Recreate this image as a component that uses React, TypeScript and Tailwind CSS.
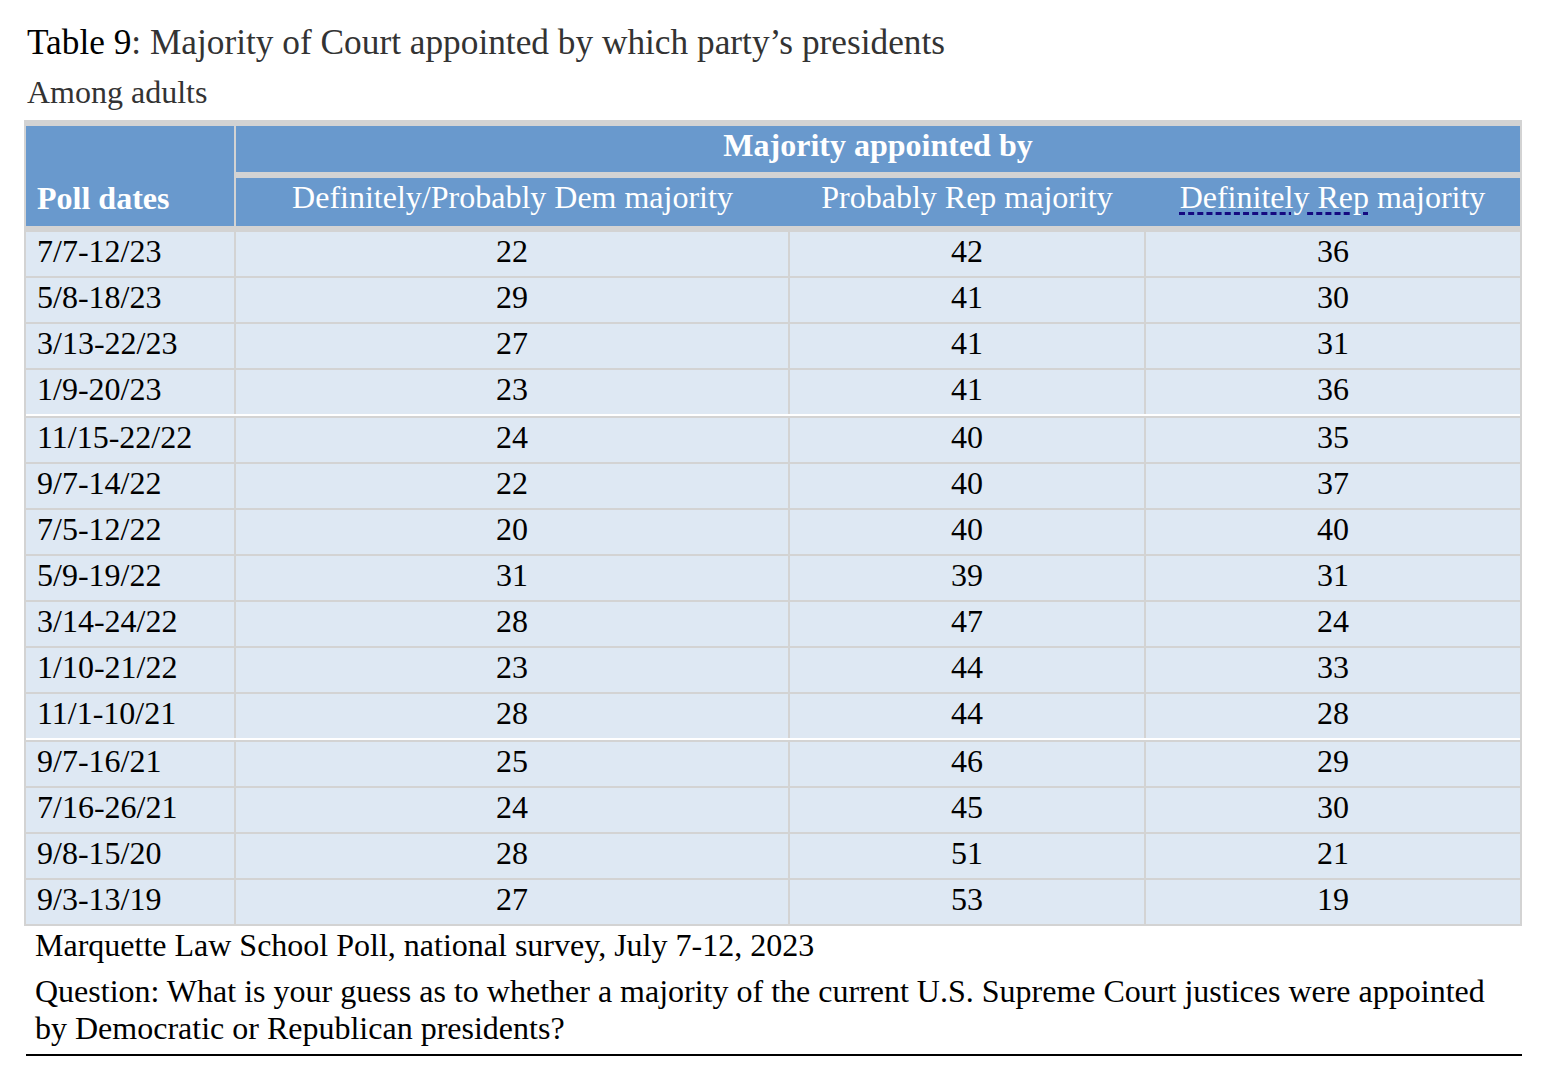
type Row = [string, number, number, number]

const rows: Row[] = [
  ["7/7-12/23", 22, 42, 36],
  ["5/8-18/23", 29, 41, 30],
  ["3/13-22/23", 27, 41, 31],
  ["1/9-20/23", 23, 41, 36],
  ["11/15-22/22", 24, 40, 35],
  ["9/7-14/22", 22, 40, 37],
  ["7/5-12/22", 20, 40, 40],
  ["5/9-19/22", 31, 39, 31],
  ["3/14-24/22", 28, 47, 24],
  ["1/10-21/22", 23, 44, 33],
  ["11/1-10/21", 28, 44, 28],
  ["9/7-16/21", 25, 46, 29],
  ["7/16-26/21", 24, 45, 30],
  ["9/8-15/20", 28, 51, 21],
  ["9/3-13/19", 27, 53, 19],
]

// rows followed by a white rule in the original table
const breakAfter = new Set(["1/9-20/23", "11/1-10/21"])

export default function App() {
  return (
    <div className="min-h-screen bg-white font-['Liberation_Serif','Times_New_Roman',serif] text-black">
      <div className="ml-[24px] w-[1498px] pt-[23px]">
        <h1 className="pl-[3px] text-[35.3px] font-normal leading-[40px]">
          <span className="text-black">Table 9</span>
          <span className="text-[#333333]">: Majority of Court appointed by which party’s presidents</span>
        </h1>
        <p className="mt-[11px] pl-[3px] text-[32px] leading-[36px] text-[#333333]">Among adults</p>

        {/* Table */}
        <div className="mt-[10px] bg-[#d3d3d3] px-[2px] pt-[6px] pb-[2px] text-[32px] leading-[36px]">
          <div className="grid grid-cols-[208px_1fr] gap-x-[2px]">
            <div className="flex h-[100px] items-end bg-[#6999cd] pb-[10px] pl-[11px] font-bold text-white">
              Poll dates
            </div>
            <div className="flex flex-col gap-[6px]">
              <div className="h-[46px] bg-[#6999cd] pt-px text-center font-bold text-white">
                Majority appointed by
              </div>
              <div className="grid h-[48px] grid-cols-[553px_356px_1fr] bg-[#6999cd] pt-px text-center text-white">
                <div>Definitely/Probably Dem majority</div>
                <div>Probably Rep majority</div>
                <div>
                  <span className="underline decoration-[#150a80] decoration-dashed decoration-[3px] underline-offset-[4px]">
                    Definitely Rep
                  </span>{" "}
                  majority
                </div>
              </div>
            </div>
          </div>

          <div className="mt-[6px] flex flex-col gap-[2px]">
            {rows.map(([date, dem, prob, def]) => (
              <div
                key={date}
                className={
                  breakAfter.has(date)
                    ? "grid h-[46px] grid-cols-[208px_552px_354px_1fr] gap-x-[2px] border-b-2 border-white"
                    : "grid h-[44px] grid-cols-[208px_552px_354px_1fr] gap-x-[2px]"
                }
              >
                <div className="bg-[#dee8f3] pl-[11px] pt-px">{date}</div>
                <div className="bg-[#dee8f3] pt-px text-center">{dem}</div>
                <div className="bg-[#dee8f3] pt-px text-center">{prob}</div>
                <div className="bg-[#dee8f3] pt-px text-center">{def}</div>
              </div>
            ))}
          </div>
        </div>

        {/* Source and question */}
        <div className="mt-[1px] pl-[11px] text-[32px] leading-[37px] text-black">
          <p>Marquette Law School Poll, national survey, July 7-12, 2023</p>
          <p className="mt-[9px]">
            Question: What is your guess as to whether a majority of the current U.S. Supreme Court justices were appointed
            by Democratic or Republican presidents?
          </p>
        </div>
        <div className="ml-[2px] mt-[7px] h-[2px] bg-black" />
      </div>
    </div>
  )
}
